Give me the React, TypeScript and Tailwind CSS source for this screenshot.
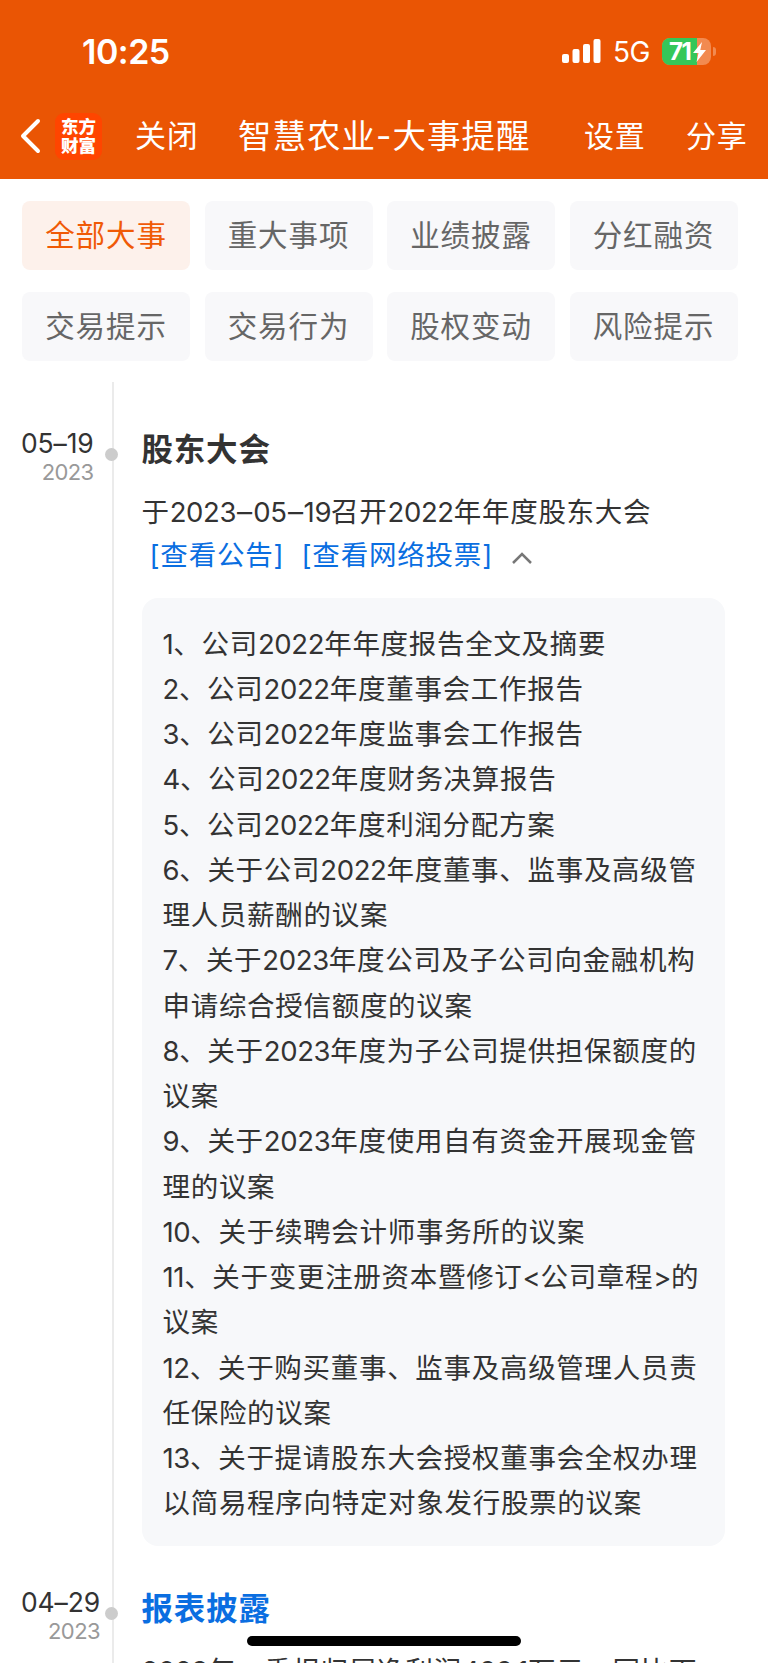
import React, { FC } from "react";

const tabs = ['全部大事', '重大事项', '业绩披露', '分红融资', '交易提示', '交易行为', '股权变动', '风险提示'];

const lineas = [
    '1、公司2022年年度报告全文及摘要',
    '2、公司2022年度董事会工作报告',
    '3、公司2022年度监事会工作报告',
    '4、公司2022年度财务决算报告',
    '5、公司2022年度利润分配方案',
    '6、关于公司2022年度董事、监事及高级管',
    '理人员薪酬的议案',
    '7、关于2023年度公司及子公司向金融机构',
    '申请综合授信额度的议案',
    '8、关于2023年度为子公司提供担保额度的',
    '议案',
    '9、关于2023年度使用自有资金开展现金管',
    '理的议案',
    '10、关于续聘会计师事务所的议案',
    '11、关于变更注册资本暨修订<公司章程>的',
    '议案',
    '12、关于购买董事、监事及高级管理人员责',
    '任保险的议案',
    '13、关于提请股东大会授权董事会全权办理',
    '以简易程序向特定对象发行股票的议案',
];

// digits keep their own tracking, the Chinese runs are a bit wider
const Texto: FC<{ children: string }> = ({ children }) => (
    <>
        {children.split(/([0-9.<>]+|–)/).map((run, i) => {
            if (run === '–') {
                return <span className="inline-block w-[17px] origin-center scale-x-110 text-center" key={i}>{run}</span>;
            }
            return <span className={i % 2 ? 'tracking-[-0.35px]' : 'tracking-[0.7px]'} key={i}>{run}</span>;
        })}
    </>
);

const Fecha: FC<{ dia: string; year: string }> = ({ dia, year }) => (
    <div className="w-[112px] shrink-0 pl-[21px]">
        <div className="inline-block text-right">
            <div className="text-[26.500px] leading-[30px] tracking-[-0.15px] text-[#333]">{dia}</div>
            <div className="text-[22px] leading-[28px] tracking-[-0.6px] text-[#999]">{year}</div>
        </div>
    </div>
);

const StatusBar = () => (
    <div className="flex h-[102px] items-center pl-[82px] pr-[57px]">
        <div className="text-[34px] font-semibold tracking-[-0.5px]">10:25</div>
        <svg className="ml-auto" width="40" height="26" viewBox="0 0 40 26" fill="#fff">
            <rect x="1" y="16" width="7" height="9" rx="2" />
            <rect x="11.500" y="11" width="7" height="14" rx="2" />
            <rect x="22" y="6" width="7" height="19" rx="2" />
            <rect x="32.500" y="1" width="7" height="24" rx="2" />
        </svg>
        <div className="ml-[12px] mt-[2px] w-[38px] text-[28px] tracking-[-0.6px]">5G</div>
        <div className="relative ml-[11px] h-[27px] w-[49px]">
            <div className="h-full overflow-hidden rounded-[8px] bg-[#f28a50]">
                <div className="h-full w-[35px] bg-[#34c759]" />
            </div>
            <div className="absolute left-[7px] top-0 text-[24px] font-bold leading-[27px] tracking-[-1.5px]">71</div>
            <svg className="absolute left-[31px] top-[4px]" width="13" height="20" viewBox="0 0 13 20" fill="#fff">
                <path d="M9 0 0 11h5.500L3.500 20 13 8H7.300Z" />
            </svg>
            <div className="absolute left-[51px] top-[9px] h-[9px] w-[3px] rounded-r-full bg-[#f28a50]" />
        </div>
    </div>
);

const App = () => {
    return (
        <div className="relative h-[1663px] w-[768px] overflow-hidden bg-white font-['Inter','Noto_Sans_CJK_SC',sans-serif]">
            <header className="h-[179px] bg-[#ea5504] text-white">
                <StatusBar />
                <div className="flex h-[68px] items-center whitespace-nowrap pl-[20px]">
                    <svg width="21" height="36" viewBox="0 0 21 36" fill="none" stroke="#fff" strokeWidth="4" strokeLinecap="round" strokeLinejoin="round">
                        <path d="M18 3 3 18l15 15" />
                    </svg>
                    <div className="ml-[14px] flex h-[47px] w-[47px] flex-col items-center justify-center rounded-[9px] bg-[#ff4500] text-[17.500px] font-black leading-[19px]">
                        <span>东方</span>
                        <span>财富</span>
                    </div>
                    <div className="ml-[33px] w-[103px] text-[31px] tracking-[0.8px]">关闭</div>
                    <div className="w-[346px] text-[33.500px] tracking-[1px]">智慧农业-大事提醒</div>
                    <div className="w-[102px] text-[30px] tracking-[0.8px]">设置</div>
                    <div className="text-[30px] tracking-[0.8px]">分享</div>
                </div>
            </header>

            <div className="ml-[22px] mt-[22px] grid w-[715.500px] grid-cols-4 gap-x-[14.500px] gap-y-[22px]">
                {tabs.map((tab, i) => (
                    <div
                        className={`flex h-[69px] items-center justify-center rounded-[8px] text-[29.500px] tracking-[0.9px] ${i === 0 ? 'bg-[#fdf1eb] text-[#f05a06]' : 'bg-[#f8f8fa] text-[#666]'}`}
                        key={tab}
                    >
                        {tab}
                    </div>
                ))}
            </div>

            <div className="relative mt-[21px] h-[1281px] pt-[46px]">
                <div className="absolute bottom-0 left-[112px] top-0 w-[2px] bg-[#ebebeb]" />
                <div className="relative flex">
                    <Fecha dia="05–19" year="2023" />
                    <div className="absolute left-[105px] top-[20px] h-[13px] w-[13px] rounded-full bg-[#ccc]" />
                    <div className="ml-[29.500px] w-[583px] whitespace-nowrap text-[27.500px] text-[#333]">
                        <h2 className="text-[31.500px] font-bold leading-[44px] tracking-[0.8px]">股东大会</h2>
                        <div className="mt-[18px] leading-[44px]"><Texto>于2023–05–19召开2022年年度股东大会</Texto></div>
                        <div className="flex h-[44px] items-center text-[#0a6ee1]">
                            <a className="ml-[8px] w-[152px] tracking-[0.8px]">[查看公告]</a>
                            <a className="w-[204px] tracking-[0.8px]">[查看网络投票]</a>
                            <svg className="ml-[6px] mt-1" width="20" height="12" viewBox="0 0 20 12" fill="none" stroke="#777" strokeWidth="2.500">
                                <path d="m1 11 9-9 9 9" />
                            </svg>
                        </div>
                        <div className="mt-[20px] h-[948px] rounded-[16px] bg-[#f7f8fa] pl-[21px] pt-[23.500px]">
                            {lineas.map((linea, i) => (
                                <div className="h-[45.250px] leading-[45.250px]" key={i}><Texto>{linea}</Texto></div>
                            ))}
                        </div>
                    </div>
                </div>
                <div className="relative mt-[41px] flex">
                    <Fecha dia="04–29" year="2023" />
                    <div className="absolute left-[105px] top-[20px] h-[13px] w-[13px] rounded-full bg-[#ccc]" />
                    <div className="ml-[29.500px] whitespace-nowrap text-[27.500px] text-[#333]">
                        <h2 className="text-[31.500px] font-bold leading-[44px] tracking-[0.8px] text-[#0a6ee1]">报表披露</h2>
                        <div className="mt-[18px] leading-[44px]"><Texto>2023年一季报归属净利润499.1万元，同比下</Texto></div>
                    </div>
                </div>
            </div>
            <div className="absolute bottom-[17px] left-[247px] h-[10px] w-[274px] rounded-full bg-black" />
        </div>
    );
}

export default App;
